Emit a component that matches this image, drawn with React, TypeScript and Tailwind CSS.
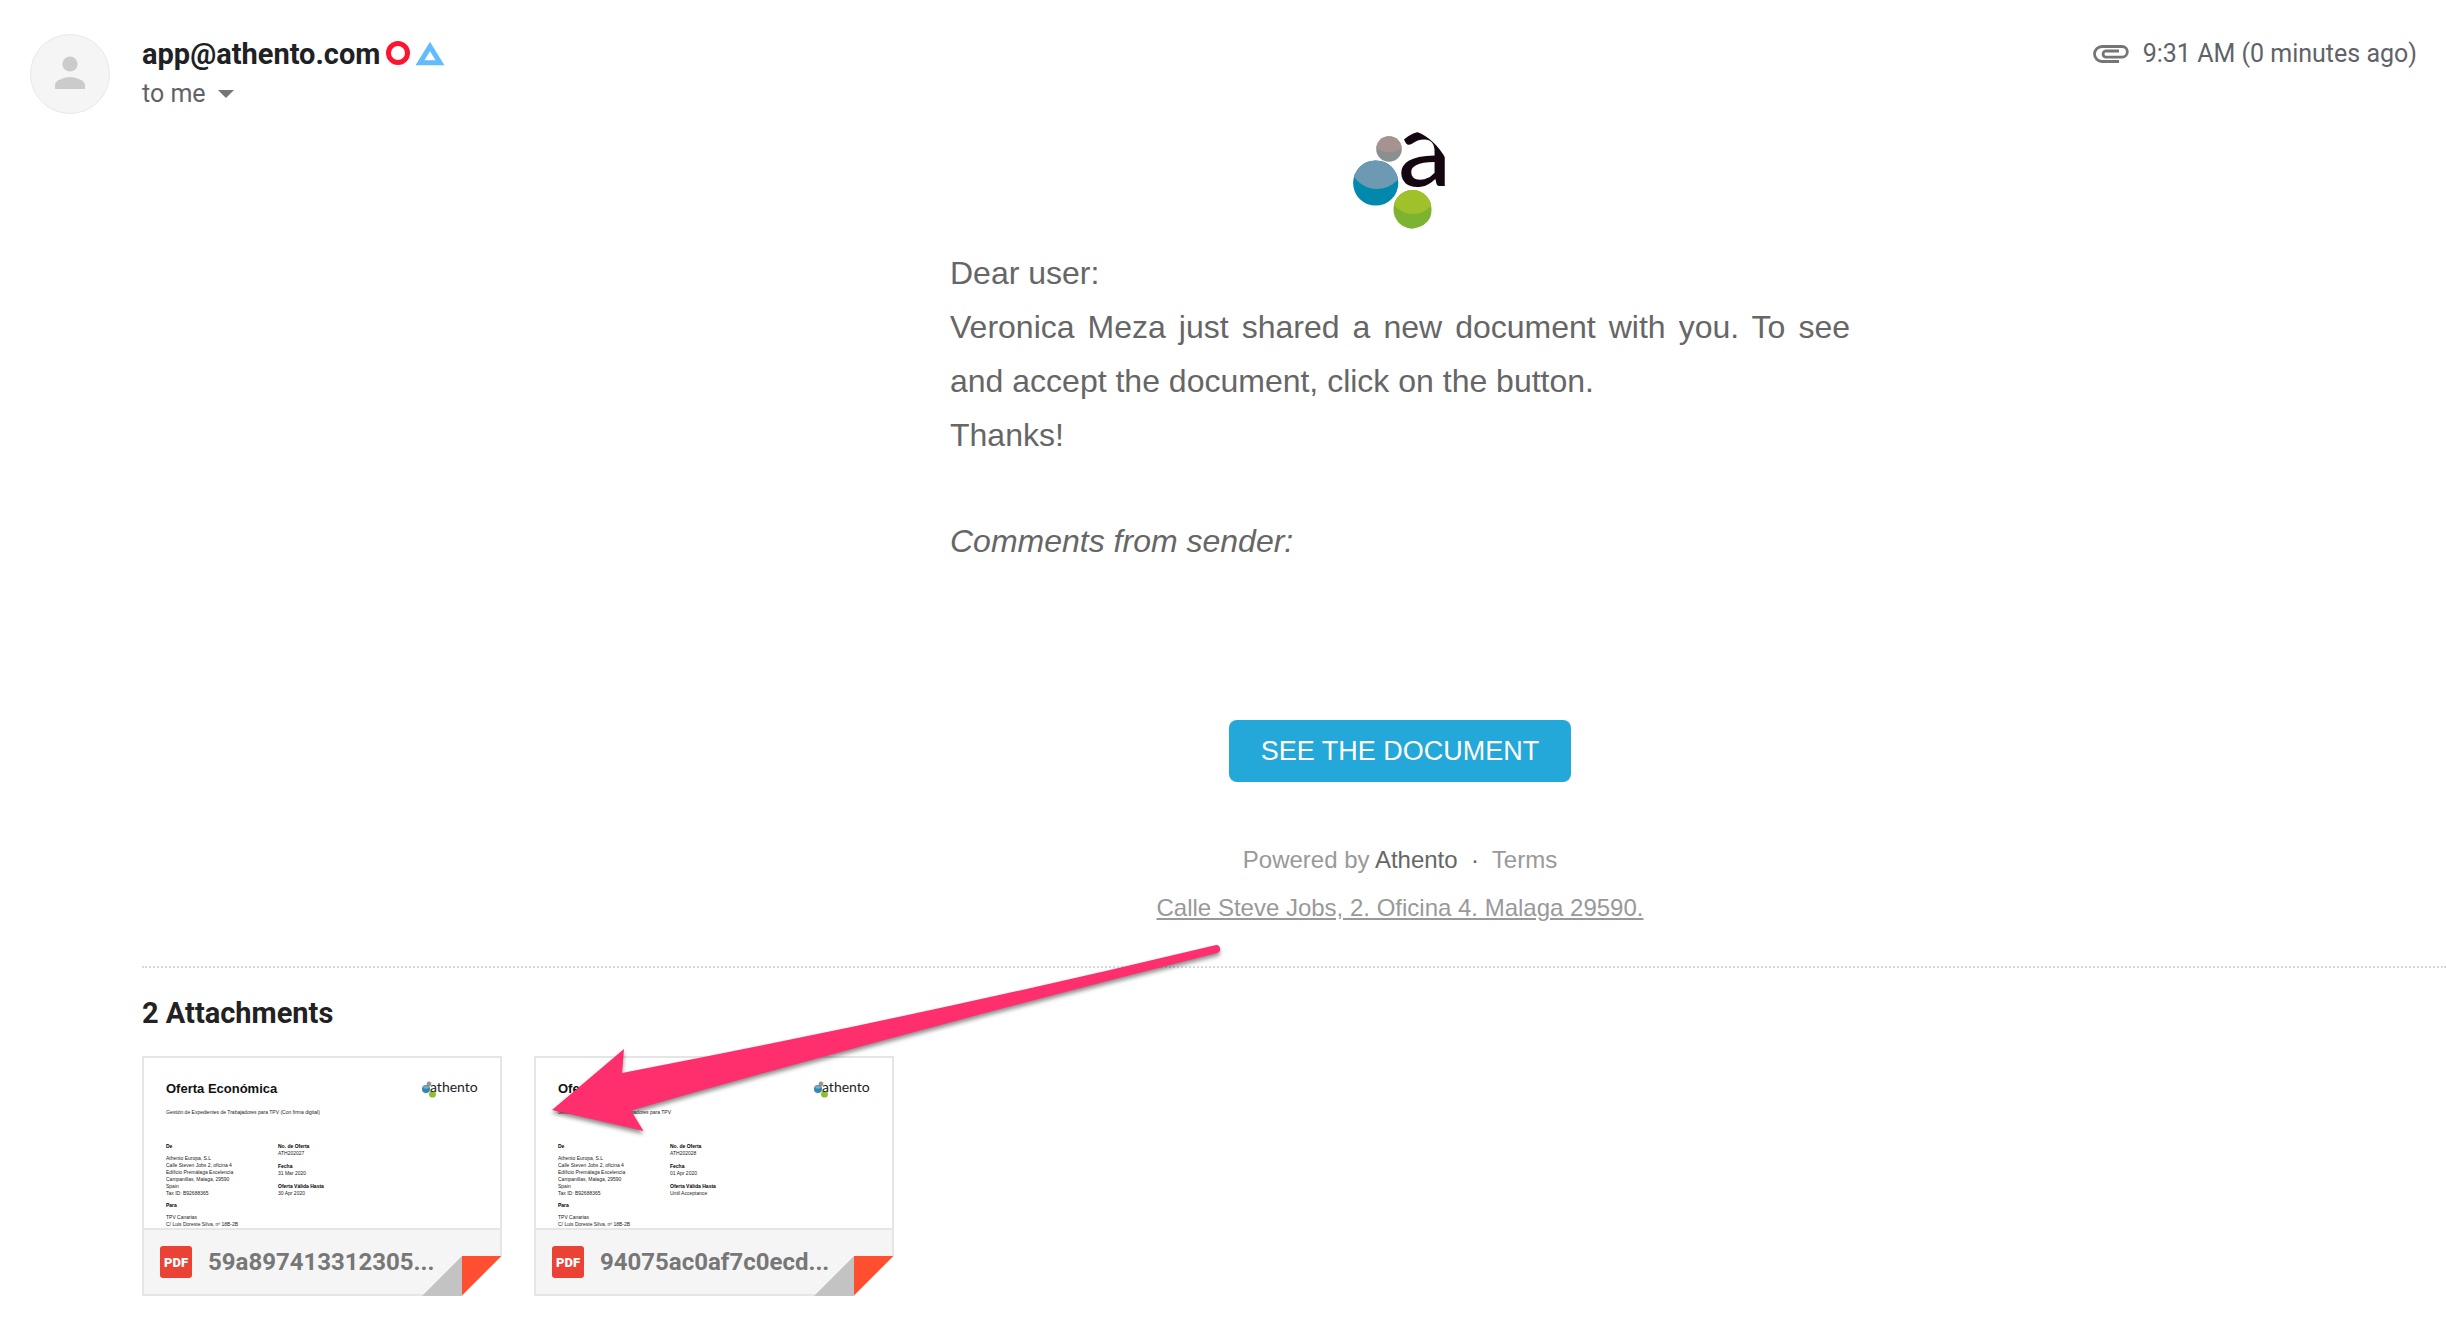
import React from "react";

function AvatarIcon() {
  return (
    <svg viewBox="0 0 80 80" className="size-20 shrink-0" role="img" aria-label="Sender">
      <circle cx="40" cy="40" r="39.500" fill="#f5f5f5" stroke="#e8e8e8" strokeWidth="1" />
      <circle cx="40" cy="30" r="7.600" fill="#cbcbcb" />
      <path d="M25 55v-4c0-5 10-8 15-8s15 3 15 8v4z" fill="#cbcbcb" />
    </svg>
  );
}

function AthentoLogo({ className }: { className: string }) {
  return (
    <svg viewBox="0 0 94 98" className={className} role="img" aria-label="Athento">
      <defs>
        <clipPath id="grayBall"><circle cx="36" cy="18" r="12.800" /></clipPath>
        <clipPath id="blueBall"><circle cx="22.700" cy="52" r="22.600" /></clipPath>
        <clipPath id="greenBall"><path d="M59.500 59a19 19 0 0 1 19 19.500c0 7-2 11-8 15.500c-4 2.500-8 3-12 3.800c-10-1-18-9-18-19.300a19 19 0 0 1 19-19.500z" /></clipPath>
      </defs>
      <text x="45" y="55" fontFamily="Lato" fontWeight="500" fontSize="107" fill="#140711">a</text>
      <path d="M64 -6V1C74 4 86 15 93 28H99V-6z" fill="#fff" />
      <circle cx="36" cy="18" r="12.800" fill="#8a9092" />
      <circle cx="36" cy="3" r="18.500" fill="#a6938f" clipPath="url(#grayBall)" />
      <circle cx="22.700" cy="52" r="22.600" fill="#0089ad" />
      <circle cx="24" cy="30.500" r="27.500" fill="#6d9ab2" clipPath="url(#blueBall)" />
      <g clipPath="url(#greenBall)">
        <rect x="38" y="56" width="44" height="44" fill="#7cb431" />
        <circle cx="60" cy="59" r="24" fill="#a1c12a" />
      </g>
    </svg>
  );
}

function WordmarkLogo() {
  return (
    <svg viewBox="0 0 56 20" className="h-5 w-14 overflow-visible" role="img" aria-label="athento">
      <circle cx="7" cy="4" r="2.400" fill="#9b9492" />
      <circle cx="4" cy="9" r="4" fill="#2f88ae" />
      <path d="M.500 7.500a4 4 0 0 1 7 0a6 6 0 0 1-7 0z" fill="#7ea9bd" />
      <circle cx="10.500" cy="14.200" r="3.400" fill="#8fbd2e" />
      <text x="8" y="12" fontFamily="Lato" fontSize="14" fill="#222">athento</text>
    </svg>
  );
}

function PaperclipIcon() {
  return (
    <svg viewBox="0 0 36 18" className="h-[18px] w-9" fill="none" stroke="#757575" strokeWidth="2.800" aria-hidden="true">
      <path d="M26 16.500H9A7.500 7.500 0 0 1 9 1.500H29A5.300 5.300 0 0 1 29 12.200H12.500A3.200 3.200 0 0 1 12.500 6H26" />
    </svg>
  );
}

function PdfIcon() {
  return (
    <svg viewBox="0 0 32 32" className="size-8 shrink-0" role="img" aria-label="PDF">
      <rect width="32" height="32" rx="3" fill="#ea4335" />
      <text x="16" y="21" textAnchor="middle" fontFamily="Roboto" fontWeight="900" fontSize="13" fill="#fff">PDF</text>
    </svg>
  );
}

type Doc = { file: string; subject: string; number: string; date: string; valid: string };

const docs: Doc[] = [
  {
    file: "59a897413312305...",
    subject: "Gestión de Expedientes de Trabajadores para TPV (Con firma digital)",
    number: "ATH202027",
    date: "31 Mar 2020",
    valid: "30 Apr 2020",
  },
  {
    file: "94075ac0af7c0ecd...",
    subject: "Gestión de Expedientes de Trabajadores para TPV",
    number: "ATH202028",
    date: "01 Apr 2020",
    valid: "Until Acceptance",
  },
];

function AttachmentCard({ doc }: { doc: Doc }) {
  return (
    <a href="#" className="relative block w-[360px] border-2 border-[#e5e5e5] bg-white">
      <div className="h-[170px] overflow-hidden px-[22px] pt-[22px] font-['Liberation_Sans',sans-serif] text-[5px] leading-[7px] text-[#222]">
        <div className="flex h-[29px] items-start justify-between">
          <h3 className="pt-px text-[13px] leading-4 font-bold text-[#111]">Oferta Económica</h3>
          <WordmarkLogo />
        </div>
        <p>{doc.subject}</p>
        <div className="mt-[27px] flex">
          <div className="w-28">
            <p className="font-bold text-black">De</p>
            <p className="mt-[5px]">Athento Europa, S.L</p>
            <p>Calle Steven Jobs 2, oficina 4</p>
            <p>Edificio Premálaga Excelencia</p>
            <p>Campanillas, Malaga, 29590</p>
            <p>Spain</p>
            <p>Tax ID: B92688365</p>
            <p className="mt-[5px] font-bold text-black">Para</p>
            <p className="mt-[5px]">TPV Canarias</p>
            <p className="whitespace-nowrap">C/ Luis Doreste Silva, nº 18B-2B</p>
          </div>
          <div>
            <p className="font-bold text-black">No. de Oferta</p>
            <p>{doc.number}</p>
            <p className="mt-[6px] font-bold text-black">Fecha</p>
            <p>{doc.date}</p>
            <p className="mt-[6px] font-bold text-black">Oferta Válida Hasta</p>
            <p>{doc.valid}</p>
          </div>
        </div>
      </div>
      <div className="flex h-[66px] items-center gap-4 border-t-2 border-[#e5e5e5] bg-[#f5f5f5] pl-4">
        <PdfIcon />
        <span className="text-[24px] leading-8 font-bold text-[#777]">{doc.file}</span>
      </div>
      <svg viewBox="0 0 80 40" className="absolute -right-0.5 -bottom-0.5 h-10 w-20" aria-hidden="true">
        <path d="M40 0H80V40H0z" fill="#fff" />
        <path d="M0 40L40 0V40z" fill="#c3c3c3" />
        <path d="M40 0H79.500L40 39.500z" fill="#ff4f30" />
      </svg>
    </a>
  );
}

function PointerArrow() {
  return (
    <svg
      viewBox="0 0 680 200"
      className="pointer-events-none absolute -top-7 left-[402px] h-[200px] w-[680px] drop-shadow-[0_3px_2px_rgba(0,0,0,0.45)]"
      aria-hidden="true"
    >
      <path
        d="M8 170L80 109L78 133Q376 76 671 5.200A4 4 0 0 1 673 13Q376 88 87 170.500L99.500 191z"
        fill="#ff2f6d"
      />
    </svg>
  );
}

export default function App() {
  return (
    <div className="min-h-screen overflow-hidden bg-white font-[Roboto,sans-serif]">
      <header className="flex gap-8 pt-[34px] pr-[29px] pl-[30px]">
        <AvatarIcon />
        <div className="flex-1">
          <div className="flex items-center gap-1.5">
            <h1 className="text-[29px] leading-10 font-bold text-[#202124]">app@athento.com</h1>
            <svg viewBox="0 0 60 26" className="h-[26px] w-[60px]" fill="none" aria-hidden="true">
              <circle cx="12" cy="12" r="9.500" stroke="#ff1430" strokeWidth="5" />
              <path d="M44 5.500L54 21.700H34z" stroke="#63bbff" strokeWidth="5" />
            </svg>
          </div>
          <button type="button" className="flex items-center gap-3 text-[25px] leading-10 text-[#5f6368]">
            to me
            <svg viewBox="0 0 16 8" className="h-2 w-4" aria-hidden="true">
              <path d="M0 0h16L8 8z" fill="#757575" />
            </svg>
          </button>
        </div>
        <div className="flex h-10 items-center gap-[14px] text-[25px] text-[#5f6368]">
          <PaperclipIcon />
          <time>9:31 AM (0 minutes ago)</time>
        </div>
      </header>

      <main className="ml-[142px]">
        <article className="pl-[212px] font-['Liberation_Sans',sans-serif] text-[#666]">
          <div className="mx-auto flex w-[900px] flex-col items-center pt-[17px]">
            <AthentoLogo className="h-[98px] w-[94px] overflow-visible" />
            <div className="mt-[17px] w-full text-[32px] leading-[54px]">
              <p>Dear user:</p>
              <p className="text-justify">
                Veronica Meza just shared a new document with you. To see and accept the document, click on the button.
              </p>
              <p>Thanks!</p>
              <p className="mt-[52px] italic">Comments from sender:</p>
            </div>
            <a
              href="#"
              className="mt-[152px] flex h-[62px] items-center rounded-lg bg-[#23a8d9] px-8 text-[27px] text-white"
            >
              SEE THE DOCUMENT
            </a>
            <p className="mt-[54px] text-[24px] leading-[48px] whitespace-pre text-[#999]">
              Powered by <a href="#" className="text-[#666]">Athento</a>
              <span className="text-[#666]">{"  ·  "}</span>
              <a href="#">Terms</a>
            </p>
            <a href="#" className="text-[24px] leading-[48px] text-[#999] underline">
              Calle Steve Jobs, 2. Oficina 4. Malaga 29590.
            </a>
          </div>
        </article>

        <section className="relative mt-[34px] border-t-2 border-dotted border-[#d8d8d8] pt-[25px]">
          <h2 className="text-[29px] leading-10 font-bold text-[#222]">2 Attachments</h2>
          <div className="mt-[23px] flex gap-8">
            {docs.map((doc) => (
              <AttachmentCard key={doc.file} doc={doc} />
            ))}
          </div>
          <PointerArrow />
        </section>
      </main>
    </div>
  );
}
